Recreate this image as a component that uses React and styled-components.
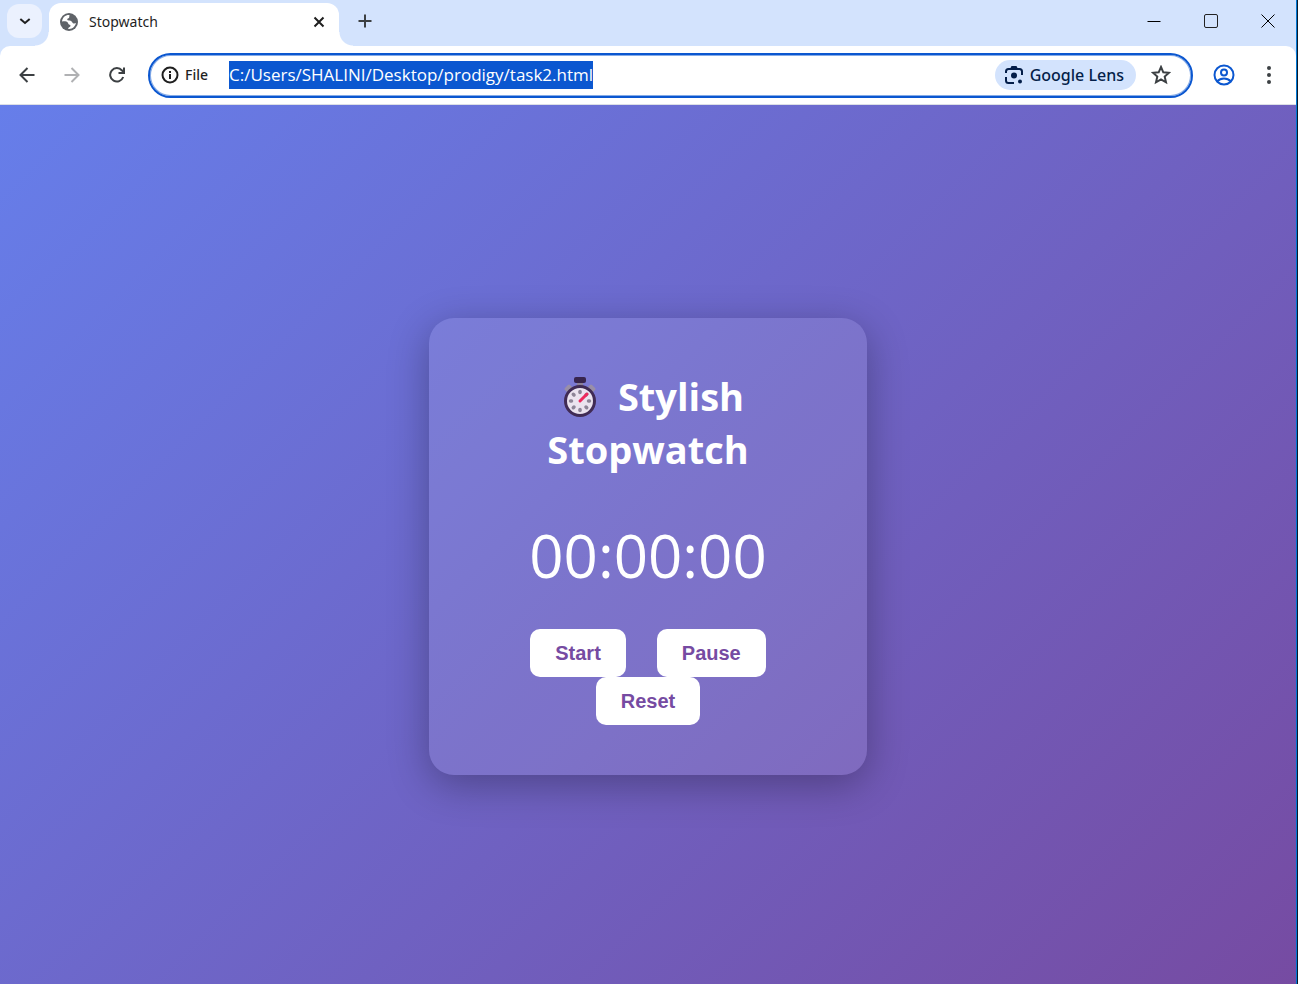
import React, { useEffect, useRef, useState } from "react";
import styled, { createGlobalStyle } from "styled-components";

const GlobalStyle = createGlobalStyle`
  *, *::before, *::after { box-sizing: border-box; }
  html, body, #root { height: 100%; }
  body { margin: 0; font-family: "Open Sans", "Noto Sans", sans-serif; }
  button, input { font: inherit; }
`;

const Window = styled.div`
  min-height: 100%;
  display: flex;
  flex-direction: column;
  background: #d3e3fd;
  border-right: 1px solid #0a1a2c;
  box-shadow: inset -1px 0 #0078d4;
  padding-right: 1px;
`;

const TabStrip = styled.header`
  display: flex;
  align-items: flex-start;
  height: 46px;
  padding: 4px 0 0 7px;
`;

const IconButton = styled.button`
  display: flex;
  align-items: center;
  justify-content: center;
  width: ${(p) => p.$w || 45}px;
  height: ${(p) => p.$h || 34}px;
  padding: 0;
  border: 0;
  border-radius: 12px;
  background: ${(p) => p.$bg || "transparent"};
  color: ${(p) => p.$color || "#3c4043"};
  flex: none;
`;

const Tab = styled.div`
  position: relative;
  display: flex;
  align-items: center;
  gap: 10px;
  width: 290px;
  height: 43px;
  margin: -1px 9px 0 7px;
  padding: 0 8px 6px 10px;
  background: #fff;
  border-radius: 12px 12px 0 0;
  font: 14px/20px "Noto Sans", "Open Sans", sans-serif;
  color: #1f1f1f;

  &::before, &::after {
    content: "";
    position: absolute;
    bottom: 0;
    width: 14px;
    height: 14px;
  }
  &::before {
    right: 100%;
    background: radial-gradient(circle at 0 0, transparent 13px, #fff 14px);
  }
  &::after {
    left: 100%;
    background: radial-gradient(circle at 100% 0, transparent 13px, #fff 14px);
  }
`;

const TabTitle = styled.span`
  flex: 1;
`;

const WindowControls = styled.div`
  display: flex;
  margin-left: auto;
`;

const Toolbar = styled.nav`
  display: flex;
  align-items: center;
  height: 59px;
  padding: 0 5px 0 4px;
  background: #fff;
  border-bottom: 1px solid #dcdfe6;
  border-radius: 10px 10px 0 0;
`;

const AddressBar = styled.div`
  flex: 1;
  display: flex;
  align-items: center;
  height: 45px;
  margin: 0 8px 0 9px;
  padding: 0 5px 0 11px;
  border: 2px solid #0b57d0;
  border-radius: 23px;
  box-shadow: inset 0 0 0 1px #85abe7;
`;

const SiteInfo = styled.button`
  display: flex;
  align-items: center;
  gap: 6px;
  padding: 0;
  margin-right: 21px;
  border: 0;
  background: none;
  font: 500 14px/20px "Noto Sans", "Open Sans", sans-serif;
  color: #1f1f1f;
`;

const Url = styled.input`
  field-sizing: content;
  height: 28px;
  padding: 0;
  border: 0;
  outline: 0;
  background: #0b57d0;
  color: #fff;
  font: 17px/28px "Open Sans", "Noto Sans", sans-serif;
`;

const LensButton = styled.button`
  display: flex;
  align-items: center;
  gap: 6px;
  height: 30px;
  margin-left: auto;
  padding: 0 12px 0 9px;
  border: 0;
  border-radius: 15px;
  background: #d3e3fd;
  color: #041e49;
  font: 500 16px/20px "Noto Sans", "Open Sans", sans-serif;
`;

const Page = styled.main`
  flex: 1;
  display: flex;
  align-items: center;
  justify-content: center;
  padding: 24px 20px 20px;
  background: linear-gradient(135deg, #667eea, #764ba2);
`;

const Card = styled.section`
  display: flex;
  flex-direction: column;
  align-items: center;
  width: 100%;
  max-width: 438px;
  padding: 52px 90px 50px;
  border-radius: 25px;
  background: rgba(255, 255, 255, 0.1);
  box-shadow: 0 10px 40px rgba(0, 0, 0, 0.3);
  color: #fff;
  text-align: center;
`;

const Title = styled.h1`
  margin: 0 0 39px;
  font-size: 38px;
  font-weight: 700;
  line-height: 53px;

  svg {
    margin: 0 13px 0 3px;
    vertical-align: -7px;
  }
`;

const Time = styled.div`
  margin-bottom: 34px;
  font-size: 60px;
  line-height: 80px;
`;

const Actions = styled.div`
  display: flex;
  flex-wrap: wrap;
  justify-content: center;
  column-gap: 31px;
`;

const ActionButton = styled.button`
  height: 48px;
  padding: 0 25px;
  border: 0;
  border-radius: 10px;
  background: #fff;
  color: #764ba2;
  font: 700 20px/24px "Liberation Sans", Arial, sans-serif;
`;

const Icon = ({ size = 20, box = 24, w = 2, children }) => (
  <svg width={size} height={size} viewBox={`0 0 ${box} ${box}`} fill="none" stroke="currentColor" strokeWidth={w} aria-hidden="true">
    {children}
  </svg>
);

const Globe = () => (
  <svg width="20" height="20" viewBox="0 0 20 20" aria-hidden="true">
    <circle cx="10" cy="10" r="9" fill="#5f6368" />
    <path d="M10.500 3C6.500 2.700 3.300 5.500 3 9.500c2.300-.5 4.500-.3 5.500.8 1 1 .5 2.200 2 2.400 1.300.2 1.300 1.800.2 2.300-.7.400-1.500.7-1.700 1.800 4 .6 7.300-2 7.900-5.800-1.500.8-3.200.4-3.700-.8-.5-1.300-1.800-1.600-3.200-1.700C7.800 8.300 7.600 6.500 9.500 6.200c1.200-.2.600-2 1-3.200Z" fill="#fff" />
  </svg>
);

const StopwatchIcon = () => {
  const marks = [0, 45, 90, 135, 180, 225, 270, 315];
  return (
    <svg width="50" height="42" viewBox="0 0 50 42" aria-hidden="true">
      <path d="m11 13 3-3 3 3-3 3ZM33 13l3-3 3 3-3 3Z" fill="#998fa8" stroke="#998fa8" strokeWidth="3" strokeLinejoin="round" />
      <rect x="22" y="6" width="6" height="5" fill="#8c8198" />
      <rect x="19" y="1" width="12" height="6" rx="2" fill="#38254e" />
      <circle cx="25" cy="25" r="14.500" fill="#ebe3ef" stroke="#402b55" strokeWidth="3" />
      {marks.map((a) => (
        <path key={a} d="M25 15.500v1" stroke="#8d8497" strokeWidth="3.500" strokeLinecap="round" transform={`rotate(${a} 25 25)`} />
      ))}
      <path d="m25 25 7-7" stroke="#ee285c" strokeWidth="3" strokeLinecap="round" />
    </svg>
  );
};

const pad = (n) => String(n).padStart(2, "0");

export default function App() {
  const [seconds, setSeconds] = useState(0);
  const timer = useRef(null);

  const pause = () => {
    clearInterval(timer.current);
    timer.current = null;
  };
  const start = () => {
    if (!timer.current) timer.current = setInterval(() => setSeconds((s) => s + 1), 1000);
  };
  const reset = () => {
    pause();
    setSeconds(0);
  };
  useEffect(() => pause, []);

  return (
    <>
      <GlobalStyle />
      <Window>
        <TabStrip>
          <IconButton $w={35} $bg="#ebf1fe" $color="#1f1f1f" aria-label="Search tabs">
            <Icon size={16} w={3}><path d="m5 9 7 6 7-6" /></Icon>
          </IconButton>
          <Tab>
            <Globe />
            <TabTitle>Stopwatch</TabTitle>
            <IconButton $w={24} $h={24} $color="#1f1f1f" aria-label="Close tab">
              <Icon size={12} box={12}><path d="m1.500 1.500 9 9m0-9-9 9" /></Icon>
            </IconButton>
          </Tab>
          <IconButton $w={34} aria-label="New tab">
            <Icon size={14} box={14}><path d="M7 .5v13M.5 7h13" /></Icon>
          </IconButton>
          <WindowControls>
            <IconButton $w={57} $color="#000" aria-label="Minimize">
              <Icon size={14} box={14} w={1}><path d="M.5 7.500h13" /></Icon>
            </IconButton>
            <IconButton $w={57} $color="#222" aria-label="Maximize">
              <Icon size={14} box={14} w={1}><rect x=".5" y=".5" width="13" height="13" rx="1.500" /></Icon>
            </IconButton>
            <IconButton $w={57} $color="#000" aria-label="Close">
              <Icon size={14} box={14} w={1}><path d="m.5.5 13 13m0-13-13 13" /></Icon>
            </IconButton>
          </WindowControls>
        </TabStrip>
        <Toolbar>
          <IconButton aria-label="Back">
            <Icon size={16} box={16}><path d="M15.500 8H2M8.500 1 1.500 8l7 7" /></Icon>
          </IconButton>
          <IconButton $color="#b0b1b3" aria-label="Forward">
            <Icon size={16} box={16}><path d="M.5 8H14M7.500 1l7 7-7 7" /></Icon>
          </IconButton>
          <IconButton aria-label="Reload">
            <Icon size={16} box={16}><path d="M14.200 10A6.700 6.700 0 1 1 13 3.500L15 6M15 .5V6H9.500" /></Icon>
          </IconButton>
          <AddressBar>
            <SiteInfo>
              <Icon size={18} box={18}><circle cx="9" cy="9" r="7.500" /><path d="M9 8v5M9 5v2" /></Icon>
              File
            </SiteInfo>
            <Url aria-label="Address" defaultValue="C:/Users/SHALINI/Desktop/prodigy/task2.html" />
            <LensButton>
              <Icon size={20} box={20}>
                <path d="M2 8V6.500A2.500 2.500 0 0 1 4.500 4h11A2.500 2.500 0 0 1 18 6.500V10M2 12v3.500A2.500 2.500 0 0 0 4.500 18H10" />
                <path d="M6 4 7.500 1h5L14 4Z" fill="currentColor" stroke="none" />
                <circle cx="10" cy="10.500" r="3" fill="currentColor" stroke="none" />
                <circle cx="16" cy="16.500" r="2" fill="currentColor" stroke="none" />
              </Icon>
              Google Lens
            </LensButton>
            <IconButton $w={50} aria-label="Bookmark">
              <Icon size={20} box={20}><path d="m10 2 2.300 5.300 5.700.5-4.300 3.800 1.300 5.700-5-3-5 3 1.300-5.700L2 7.800l5.700-.5Z" /></Icon>
            </IconButton>
          </AddressBar>
          <IconButton $color="#0b57d0" aria-label="Profile">
            <Icon size={22} box={22}>
              <circle cx="11" cy="11" r="9.500" /><circle cx="11" cy="8.500" r="3" /><path d="M4 17.500c4-4 10-4 14 0" />
            </Icon>
          </IconButton>
          <IconButton aria-label="Menu">
            <svg width="18" height="18" viewBox="0 0 18 18" fill="currentColor" aria-hidden="true">
              <circle cx="9" cy="2" r="2" /><circle cx="9" cy="9" r="2" /><circle cx="9" cy="16" r="2" />
            </svg>
          </IconButton>
        </Toolbar>
        <Page>
          <Card>
            <Title><StopwatchIcon />Stylish Stopwatch</Title>
            <Time role="timer">{pad(Math.floor(seconds / 3600))}:{pad(Math.floor(seconds / 60) % 60)}:{pad(seconds % 60)}</Time>
            <Actions>
              <ActionButton onClick={start}>Start</ActionButton>
              <ActionButton onClick={pause}>Pause</ActionButton>
              <ActionButton onClick={reset}>Reset</ActionButton>
            </Actions>
          </Card>
        </Page>
      </Window>
    </>
  );
}
